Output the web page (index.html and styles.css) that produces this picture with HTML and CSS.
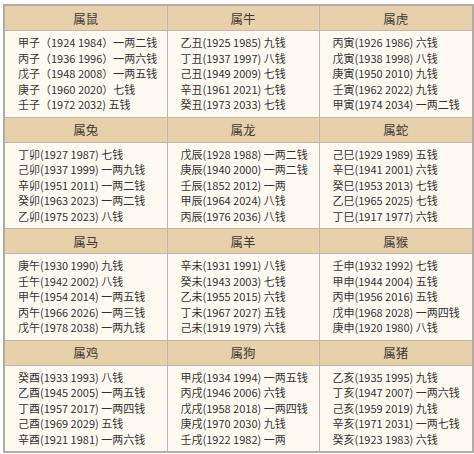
FILE: index.html
```html
<!DOCTYPE html>
<html lang="zh">
<head>
<meta charset="utf-8">
<link rel="stylesheet" href="styles.css">
</head>
<body>
<table class="zodiac">
  <colgroup><col class="c1"><col class="c2"><col class="c3"></colgroup>
  <tr class="head"><th>属鼠</th><th>属牛</th><th>属虎</th></tr>
  <tr class="body">
    <td><div>甲子（1924 1984）一两二钱</div><div>丙子（1936 1996）一两六钱</div><div>戊子（1948 2008）一两五钱</div><div>庚子（1960 2020）七钱</div><div>壬子（1972 2032) 五钱</div></td>
    <td><div>乙丑(1925 1985) 九钱</div><div>丁丑(1937 1997) 八钱</div><div>己丑(1949 2009) 七钱</div><div>辛丑(1961 2021) 七钱</div><div>癸丑(1973 2033) 七钱</div></td>
    <td><div>丙寅(1926 1986) 六钱</div><div>戊寅(1938 1998) 八钱</div><div>庚寅(1950 2010) 九钱</div><div>壬寅(1962 2022) 九钱</div><div>甲寅(1974 2034) 一两二钱</div></td>
  </tr>
  <tr class="head"><th>属兔</th><th>属龙</th><th>属蛇</th></tr>
  <tr class="body">
    <td><div>丁卯(1927 1987) 七钱</div><div>己卯(1937 1999) 一两九钱</div><div>辛卯(1951 2011) 一两二钱</div><div>癸卯(1963 2023) 一两二钱</div><div>乙卯(1975 2023) 八钱</div></td>
    <td><div>戊辰(1928 1988) 一两二钱</div><div>庚辰(1940 2000) 一两二钱</div><div>壬辰(1852 2012) 一两</div><div>甲辰(1964 2024) 八钱</div><div>丙辰(1976 2036) 八钱</div></td>
    <td><div>己巳(1929 1989) 五钱</div><div>辛巳(1941 2001) 六钱</div><div>癸巳(1953 2013) 七钱</div><div>乙巳(1965 2025) 七钱</div><div>丁巳(1917 1977) 六钱</div></td>
  </tr>
  <tr class="head"><th>属马</th><th>属羊</th><th>属猴</th></tr>
  <tr class="body">
    <td><div>庚午(1930 1990) 九钱</div><div>壬午(1942 2002) 八钱</div><div>甲午(1954 2014) 一两五钱</div><div>丙午(1966 2026) 一两三钱</div><div>戊午(1978 2038) 一两九钱</div></td>
    <td><div>辛未(1931 1991) 八钱</div><div>癸未(1943 2003) 七钱</div><div>乙未(1955 2015) 六钱</div><div>丁未(1967 2027) 五钱</div><div>己未(1919 1979) 六钱</div></td>
    <td><div>壬申(1932 1992) 七钱</div><div>甲申(1944 2004) 五钱</div><div>丙申(1956 2016) 五钱</div><div>戊申(1968 2028) 一两四钱</div><div>庚申(1920 1980) 八钱</div></td>
  </tr>
  <tr class="head"><th>属鸡</th><th>属狗</th><th>属猪</th></tr>
  <tr class="body">
    <td><div>癸酉(1933 1993) 八钱</div><div>乙酉(1945 2005) 一两五钱</div><div>丁酉(1957 2017) 一两四钱</div><div>己酉(1969 2029) 五钱</div><div>辛酉(1921 1981) 一两六钱</div></td>
    <td><div>甲戌(1934 1994) 一两五钱</div><div>丙戌(1946 2006) 六钱</div><div>戊戌(1958 2018) 一两四钱</div><div>庚戌(1970 2030) 九钱</div><div>壬戌(1922 1982) 一两</div></td>
    <td><div>乙亥(1935 1995) 九钱</div><div>丁亥(1947 2007) 一两六钱</div><div>己亥(1959 2019) 九钱</div><div>辛亥(1971 2031) 一两七钱</div><div>癸亥(1923 1983) 六钱</div></td>
  </tr>
</table>
</body>
</html>
```
FILE: styles.css
```css
html, body {
  margin: 0;
  padding: 0;
  background: #ffffff;
}
body {
  padding: 4px 2px 0 3px;
  font-family: "Noto Sans CJK SC", "Noto Sans", sans-serif;
  color: #333333;
}
.zodiac {
  border-collapse: collapse;
  table-layout: fixed;
  width: 469px;
  border: 2px solid #b0aba4;
}
.c1 { width: 163px; }
.c2 { width: 152px; }
.c3 { width: 154px; }
.zodiac th, .zodiac td {
  border: 1px solid #bdb7ae;
}
.head th {
  height: 24px;
  padding: 0;
  background: #e8d0aa;
  font-weight: normal;
  font-size: 12.5px;
  color: #3a3a3a;
  text-align: center;
}
.body td {
  background: #fefaf1;
  padding: 4px 0 4px 13px;
  font-size: 11px;
  line-height: 15.5px;
  vertical-align: top;
  white-space: nowrap;
}
```
